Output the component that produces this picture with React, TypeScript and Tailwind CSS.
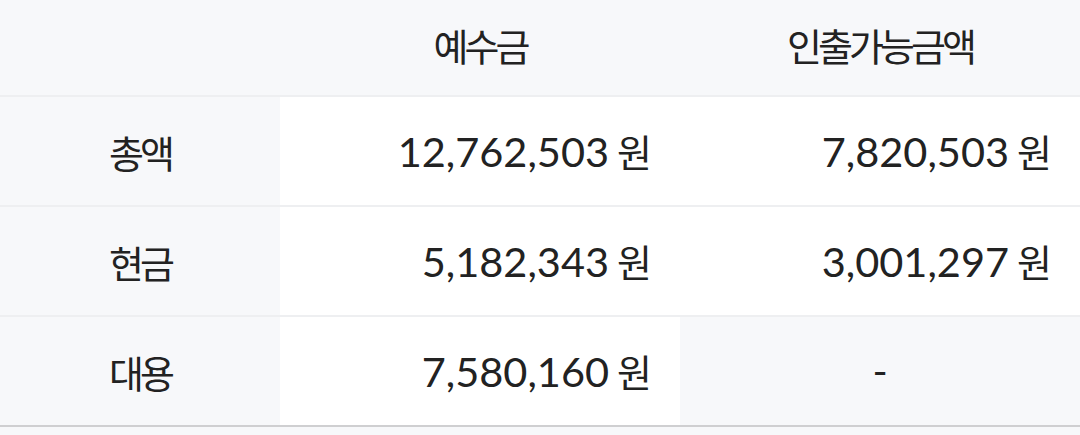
const rows = [
  { label: "총액", deposit: "12,762,503", withdrawable: "7,820,503" },
  { label: "현금", deposit: "5,182,343", withdrawable: "3,001,297" },
  { label: "대용", deposit: "7,580,160", withdrawable: null },
];

const ko = "[font-family:'Noto_Sans_CJK_KR',sans-serif]";

function Amount({ value }: { value: string }) {
  return (
    <span className="flex items-baseline gap-[8px]">
      <span className="font-['Lato',sans-serif] text-[41.5px]">{value}</span>
      <span className={`${ko} text-[38px] tracking-[-4px]`}>원</span>
    </span>
  );
}

export default function App() {
  return (
    <div className="min-h-screen bg-[#f7f8fa] text-[#222]">
      <div className="grid grid-cols-[280px_400px_400px] h-[97px] border-b-2 border-[#eeeff1] items-center pb-[6px]">
        <div />
        <div className={`${ko} text-center text-[38px] tracking-[-4px]`}>예수금</div>
        <div className={`${ko} text-center text-[38px] tracking-[-4px]`}>인출가능금액</div>
      </div>

      {rows.map((row, i) => {
        const last = i === rows.length - 1;
        return (
          <div
            key={row.label}
            className={`grid grid-cols-[280px_400px_400px] h-[110px] border-b-2 ${
              last ? "border-[#cfcfd1]" : "border-[#eeeff1]"
            }`}
          >
            <div className={`${ko} flex items-center justify-center bg-[#f7f8fa] text-[38px] tracking-[-4px]`}>
              {row.label}
            </div>
            <div className="flex items-center justify-end bg-white pr-[32px]">
              <Amount value={row.deposit} />
            </div>
            {row.withdrawable ? (
              <div className="flex items-center justify-end bg-white pr-[32px]">
                <Amount value={row.withdrawable} />
              </div>
            ) : (
              <div className="flex items-center justify-center bg-[#f7f8fa] font-['Lato',sans-serif] text-[41px]">
                -
              </div>
            )}
          </div>
        );
      })}
    </div>
  );
}
